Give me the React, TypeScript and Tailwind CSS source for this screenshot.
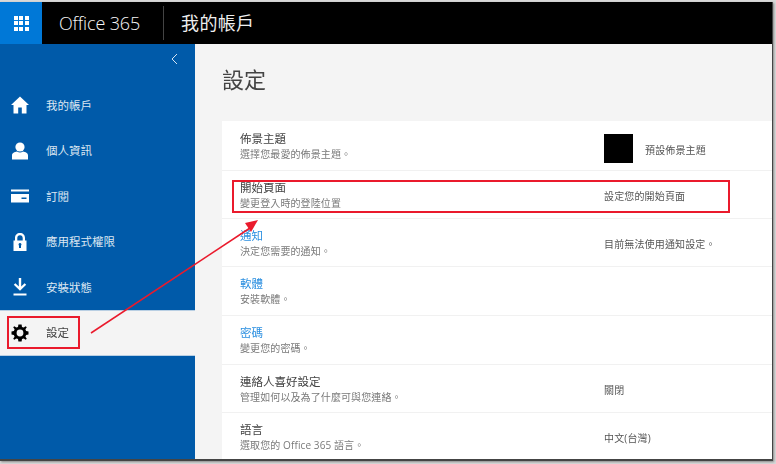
const font = "font-['Open_Sans','Noto_Sans_CJK_TC',sans-serif]";

function NavIcon({ name }: { name: string }) {
  if (name === "home") {
    return (
      <svg width="18" height="18" viewBox="0 0 18 18" fill="currentColor">
        <path d="M9 0.5 L18 9 L15.5 9 L15.5 17.5 L10.8 17.5 L10.8 11.5 L7.2 11.5 L7.2 17.5 L2.5 17.5 L2.5 9 L0 9 Z" />
      </svg>
    );
  }
  if (name === "user") {
    return (
      <svg width="18" height="18" viewBox="0 0 18 18" fill="currentColor">
        <circle cx="9" cy="5" r="4.6" />
        <path d="M1 17.5 L1 13.5 C1 11 3.5 9.8 6 9.5 C8 10.8 10 10.8 12 9.5 C14.5 9.8 17 11 17 13.5 L17 17.5 Z" />
      </svg>
    );
  }
  if (name === "card") {
    return (
      <svg width="18" height="14" viewBox="0 0 18 14" fill="currentColor">
        <path d="M0 0.5 H18 V2.5 H0 Z" />
        <path d="M0 5 H18 V13.5 H0 Z M10.5 8.5 V10 H15.5 V8.5 Z" fillRule="evenodd" />
      </svg>
    );
  }
  if (name === "lock") {
    return (
      <svg width="14" height="18" viewBox="0 0 14 18" fill="currentColor">
        <path
          fillRule="evenodd"
          d="M7 0 C10 0 12 2 12 5 V7.5 H13.5 V18 H0.5 V7.5 H2 V5 C2 2 4 0 7 0 Z M7 2.2 C5.2 2.2 4.3 3.4 4.3 5 V7.5 H9.7 V5 C9.7 3.4 8.8 2.2 7 2.2 Z M7 10 A1.5 1.5 0 0 0 6 12.6 V15 H8 V12.6 A1.5 1.5 0 0 0 7 10 Z"
        />
      </svg>
    );
  }
  if (name === "download") {
    return (
      <svg width="14" height="18" viewBox="0 0 14 18" fill="currentColor">
        <path d="M5.8 0 H8.2 V8.5 L11.6 5.2 L13.2 6.8 L7 12.8 L0.8 6.8 L2.4 5.2 L5.8 8.5 Z" />
        <path d="M0.5 15.5 H13.5 V17.5 H0.5 Z" />
      </svg>
    );
  }
  return (
    <svg width="18" height="18" viewBox="0 0 18 18" fill="currentColor">
      <path
        fillRule="evenodd"
        d="M7.4 0.5 H10.6 L11 2.9 L12.7 3.6 L14.7 2.2 L15.8 3.3 L14.4 5.3 L15.1 7 L17.5 7.4 V10.6 L15.1 11 L14.4 12.7 L15.8 14.7 L14.7 15.8 L12.7 14.4 L11 15.1 L10.6 17.5 H7.4 L7 15.1 L5.3 14.4 L3.3 15.8 L2.2 14.7 L3.6 12.7 L2.9 11 L0.5 10.6 V7.4 L2.9 7 L3.6 5.3 L2.2 3.3 L3.3 2.2 L5.3 3.6 L7 2.9 Z M9 5.6 A3.4 3.4 0 1 0 9 12.4 A3.4 3.4 0 1 0 9 5.6 Z"
      />
    </svg>
  );
}

const nav = [
  { icon: "home", label: "我的帳戶", h: "h-[46px]" },
  { icon: "user", label: "個人資訊", h: "h-[45px]" },
  { icon: "card", label: "訂閱", h: "h-[46px]" },
  { icon: "lock", label: "應用程式權限", h: "h-[45px]" },
  { icon: "download", label: "安裝狀態", h: "h-[46px]" },
];

const rows = [
  { title: "佈景主題", sub: "選擇您最愛的佈景主題。", value: "預設佈景主題", swatch: true, h: "h-[50px]" },
  { title: "開始頁面", sub: "變更登入時的登陸位置", value: "設定您的開始頁面", h: "h-[48px]" },
  { title: "通知", sub: "決定您需要的通知。", value: "目前無法使用通知設定。", link: true, h: "h-[48px]" },
  { title: "軟體", sub: "安裝軟體。", link: true, h: "h-[49px]" },
  { title: "密碼", sub: "變更您的密碼。", link: true, h: "h-[49px]" },
  { title: "連絡人喜好設定", sub: "管理如何以及為了什麼可與您連絡。", value: "關閉", h: "h-[48px]" },
  { title: "語言", sub: "選取您的 Office 365 語言。", value: "中文(台灣)", h: "h-[48px]" },
];

export default function App() {
  return (
    <div lang="zh-TW" className={`${font} relative h-[464px] w-[776px] overflow-hidden bg-[#d8d8d8] pt-[2px]`}>
      <div className="flex h-[459px] w-[773px] flex-col overflow-hidden border-r border-b-2 border-[#444] bg-[#f4f4f4] shadow-[1px_1px_2px_#888] blur-[0.3px]">
        <header className="flex h-[42px] shrink-0 items-center bg-black text-white">
          <div className="flex h-[42px] w-[42px] items-center justify-center bg-[#0078d7]">
            <div className="grid grid-cols-3 gap-[1.5px]">
              {Array.from({ length: 9 }).map((_, i) => (
                <span key={i} className="h-[4px] w-[4px] bg-white" />
              ))}
            </div>
          </div>
          <div className="ml-[17px] text-[18px] font-light tracking-[-0.15px] text-[#f6f6f6]">Office 365</div>
          <div className="ml-[23px] h-[34px] w-px bg-[#444]" />
          <div className="ml-[17px] text-[18px] tracking-[0.3px] text-[#eeeeee]">我的帳戶</div>
        </header>
        <div className="flex min-h-0 flex-1">
          <aside className="flex w-[195px] shrink-0 flex-col bg-[#005aa9] text-white">
            <div className="flex h-[38px] justify-end pr-[17px] pt-[9px] text-[#d5e4f2]">
              <svg width="7" height="12" viewBox="0 0 7 12" fill="none" stroke="currentColor" strokeWidth="1">
                <path d="M6 1 L1 6 L6 11" />
              </svg>
            </div>
            {nav.map((n) => (
              <div key={n.label} className={`flex ${n.h} items-center`}>
                <div className="flex w-[46px] justify-center pr-[6px]">
                  <NavIcon name={n.icon} />
                </div>
                <span className="pt-[1px] text-[11.5px] text-[#dce7f2]">{n.label}</span>
              </div>
            ))}
            <div className="flex h-[46px] items-center border-y border-[#b9cfe3] bg-[#f4f4f4] text-black">
              <div className="flex w-[46px] justify-center pr-[6px]">
                <NavIcon name="gear" />
              </div>
              <span className="text-[11.5px] text-[#444]">設定</span>
            </div>
          </aside>
          <main className="min-w-0 flex-1 pl-[27px]">
            <h1 className="flex h-[77px] items-start pt-[19px] text-[22px] leading-[32px] text-[#444]">設定</h1>
            <div className="bg-white">
              {rows.map((r) => (
                <div key={r.title} className={`flex ${r.h} items-center border-b border-[#f1f1f1] pl-[18px]`}>
                  <div className="w-[364px] shrink-0">
                    <div className={`text-[11.5px] leading-[15px] ${r.link ? "text-[#2b8fe0]" : "text-[#444]"}`}>{r.title}</div>
                    <div className="pt-[1px] text-[10px] leading-[14px] tracking-[0.1px] text-[#7a7a7a]">{r.sub}</div>
                  </div>
                  {r.swatch && <div className="mr-[12px] mt-[5px] h-[29px] w-[29px] bg-black" />}
                  {r.value && <div className={`text-[10px] tracking-[0.15px] text-[#555] ${r.swatch ? "pt-[9px]" : "pt-[4px]"}`}>{r.value}</div>}
                </div>
              ))}
            </div>
          </main>
        </div>
      </div>

      {/* annotations */}
      <div className="absolute left-[232px] top-[180px] h-[33px] w-[498px] border-2 border-[#ea1a2c]" />
      <div className="absolute left-[7px] top-[316px] h-[33px] w-[73px] border-2 border-[#ea1a2c]" />
      <svg className="absolute left-0 top-0" width="776" height="464" viewBox="0 0 776 464" fill="none">
        <path d="M91 333 L250 228" stroke="#ea1a2c" strokeWidth="1.5" />
        <path d="M258 220 L245 223 L251 232 Z" fill="#ea1a2c" />
      </svg>
    </div>
  );
}
